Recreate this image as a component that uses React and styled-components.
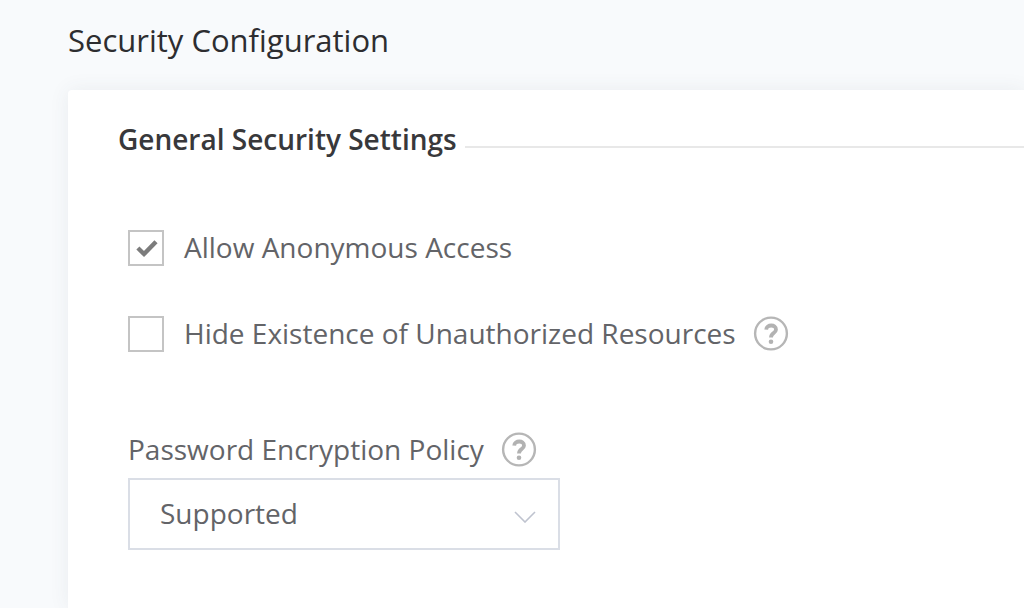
import React, { useState } from "react";
import styled, { createGlobalStyle } from "styled-components";

const GlobalStyle = createGlobalStyle`
  * { box-sizing: border-box; }
  body {
    margin: 0;
    background: #f8fafc;
    color: #636468;
    font-family: "Open Sans", sans-serif;
    font-size: 28px;
    line-height: 38px;
  }
`;

const Page = styled.main`
  display: flex;
  flex-direction: column;
  min-height: 100vh;
  padding-left: 68px;
`;

const PageTitle = styled.h1`
  margin: 0;
  padding: 16px 0 26px;
  font-size: 31px;
  line-height: 48px;
  font-weight: 400;
  color: #2d2d30;
`;

const Panel = styled.section`
  flex: 1;
  padding: 30px 0 58px 50px;
  border-radius: 4px 0 0 0;
  background: #fff;
  box-shadow: 0 0 20px rgba(60, 80, 90, 0.08);
`;

const SectionHeading = styled.h2`
  display: flex;
  gap: 8px;
  margin: 0;
  padding-bottom: 2px;
  font-size: 28px;
  line-height: 38px;
  font-weight: 600;
  color: #38383b;

  &::after {
    content: "";
    flex: 1;
    height: 2px;
    margin-top: 26px;
    background: #e8e8e8;
  }
`;

const Fields = styled.div`
  padding: 68px 10px 0;
`;

const OptionRow = styled.div`
  display: flex;
  align-items: center;
  gap: 18px;
  margin-bottom: 46px;
`;

const OptionLabel = styled.label`
  display: flex;
  align-items: center;
  gap: 20px;
`;

const LabelText = styled.span`
  padding-bottom: 2px;
`;

const CheckFrame = styled.span`
  display: grid;
  flex: none;
  width: 36px;
  height: 36px;

  > * { grid-area: 1 / 1; }
  > svg { place-self: center; pointer-events: none; }
`;

const Checkbox = styled.input`
  appearance: none;
  width: 36px;
  height: 36px;
  margin: 0;
  border: 2px solid #c4c4c4;
  background: #fff;
`;

const HelpButton = styled.button`
  display: flex;
  padding: 0;
  border: 0;
  background: none;
`;

const HelpIcon = styled.svg`
  overflow: visible;
  filter: blur(0.7px);
`;

const PolicyField = styled.div`
  padding-top: 30px;
`;

const LabelRow = styled.div`
  display: flex;
  align-items: center;
  gap: 18px;
  margin-bottom: 8px;
`;

const PolicyLabel = styled.label`
  padding-bottom: 2px;
`;

const SelectFrame = styled.div`
  display: grid;
  max-width: 432px;

  > * { grid-area: 1 / 1; }
  > svg { place-self: center end; margin: 6px 24px 0 0; pointer-events: none; }
`;

const Select = styled.select`
  appearance: none;
  width: 100%;
  height: 72px;
  padding: 0 60px 2px 30px;
  border: 2px solid #dadee6;
  border-radius: 0;
  background: #fff;
  color: inherit;
  font: inherit;
`;

function Help({ topic }) {
  return (
    <HelpButton type="button" aria-label={`Help: ${topic}`}>
      <HelpIcon width="36" height="36" viewBox="0 0 36 36" fill="none">
        <circle cx="17" cy="17.5" r="15.9" stroke="#b6b6b6" strokeWidth="2.4" />
        <path d="M12.2 13.6C12.4 8.1 22.2 8.1 22 13.6C21.8 17.2 17 17 17 21.5" stroke="#b2b2b2" strokeWidth="3.8" />
        <circle cx="17" cy="25.8" r="2.3" fill="#b2b2b2" />
      </HelpIcon>
    </HelpButton>
  );
}

function Option({ label, initial = false, help = false }) {
  const [checked, setChecked] = useState(initial);
  return (
    <OptionRow>
      <OptionLabel>
        <CheckFrame>
          <Checkbox type="checkbox" checked={checked} onChange={(e) => setChecked(e.target.checked)} />
          {checked && (
            <svg width="36" height="36" viewBox="0 0 36 36" fill="none">
              <path d="M9.9 18L16 24L28 11.7" stroke="#7c7c7c" strokeWidth="4.4" />
            </svg>
          )}
        </CheckFrame>
        <LabelText>{label}</LabelText>
      </OptionLabel>
      {help && <Help topic={label} />}
    </OptionRow>
  );
}

export default function App() {
  return (
    <>
      <GlobalStyle />
      <Page>
        <PageTitle>Security Configuration</PageTitle>
        <Panel>
          <SectionHeading>General Security Settings</SectionHeading>
          <Fields>
            <Option label="Allow Anonymous Access" initial />
            <Option label="Hide Existence of Unauthorized Resources" help />
            <PolicyField>
              <LabelRow>
                <PolicyLabel htmlFor="encryption-policy">Password Encryption Policy</PolicyLabel>
                <Help topic="Password Encryption Policy" />
              </LabelRow>
              <SelectFrame>
                <Select id="encryption-policy" defaultValue="Supported">
                  <option>Supported</option>
                </Select>
                <svg width="22" height="12" viewBox="0 0 22 12" fill="none">
                  <path d="M1 1L11 11L21 1" stroke="#bfc3cf" strokeWidth="1.6" />
                </svg>
              </SelectFrame>
            </PolicyField>
          </Fields>
        </Panel>
      </Page>
    </>
  );
}
